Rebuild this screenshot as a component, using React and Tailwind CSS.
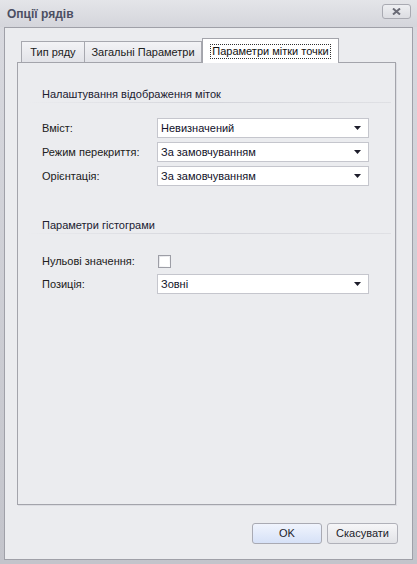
import { useState } from "react";

const font = { fontFamily: '"Liberation Sans", Arial, sans-serif' };

const Arrow = () => (
  <svg width="7" height="4" viewBox="0 0 7 4" className="shrink-0">
    <path d="M0 0h7L3.5 4z" fill="#1d1d2b" />
  </svg>
);

const Combo = ({ value }) => (
  <div className="flex h-[20px] w-[212px] items-center justify-between border border-[#c5c6cd] bg-white pl-[3px] pr-[7px] text-[#11112a]">
    <span>{value}</span>
    <Arrow />
  </div>
);

const Row = ({ label, children }) => (
  <div className="flex h-[20px] items-center">
    <div className="w-[115px] shrink-0 text-[#202020]">{label}</div>
    {children}
  </div>
);

const SectionTitle = ({ children }) => (
  <div>
    <div className="ml-[24px] h-[16px] leading-[16px] text-[#202030]">{children}</div>
    <div className="ml-[8px] mr-[4px] h-px bg-gradient-to-r from-transparent via-[#d3d4da] to-[#dfe0e4]" />
  </div>
);

const Tab = ({ label, width, active, onClick }) =>
  active ? (
    <div
      className={`${width} relative z-10 -mb-px flex h-[25px] items-center justify-center border border-b-0 border-[#a3a4ab] bg-white`}
    >
      <span className="border border-dotted border-[#303030] px-[1px] leading-[13px] text-[#101010]">
        {label}
      </span>
    </div>
  ) : (
    <button
      onClick={onClick}
      className={`${width} flex h-[21px] items-center justify-center border border-b-0 border-[#a7a8af] bg-gradient-to-b from-[#f3f3f6] to-[#e2e3e8] text-[#202020]`}
    >
      {label}
    </button>
  );

export default function App() {
  const [tab, setTab] = useState(2);
  const [zeroValues, setZeroValues] = useState(false);

  return (
    <div
      style={font}
      className="flex h-[564px] w-[417px] flex-col bg-gradient-to-b from-[#d9dae0] to-[#c3c4cb] text-[11px]"
    >
      {/* title bar */}
      <div className="flex h-[27px] items-center justify-between pl-[7px] pr-[6px] bg-gradient-to-b from-[#e4e5e9] to-[#d4d5db]">
        <span className="text-[12px] font-bold text-[#4c4f63]">Опції рядів</span>
        <button className="mb-[4px] flex h-[15px] w-[29px] items-center justify-center rounded-[3px] border border-[#a9aab2] bg-gradient-to-b from-[#eeeff2] to-[#dcdde2]">
          <svg width="9" height="7" viewBox="0 0 9 7">
            <path d="M1 0.5l7 6M8 0.5l-7 6" stroke="#6a6b76" strokeWidth="2" />
          </svg>
        </button>
      </div>

      <div className="flex flex-1 flex-col px-[4px] pb-[4px]">
        <div className="flex flex-1 flex-col border border-[#9fa0a8] bg-[#ebecef]">
          {/* tab strip */}
          <div className="ml-[12px] mt-[10px] flex h-[24px] items-end pl-[4px]">
            <Tab label="Тип ряду" width="w-[64px]" active={tab === 0} onClick={() => setTab(0)} />
            <Tab label="Загальні Параметри" width="w-[118px] -ml-px" active={tab === 1} onClick={() => setTab(1)} />
            <Tab label="Параметри мітки точки" width="w-[137px]" active={tab === 2} onClick={() => setTab(2)} />
          </div>

          {/* tab page */}
          <div className="ml-[12px] h-[443px] w-[379px] border border-[#a3a4ab] bg-[#ebecef] shadow-[1px_1px_0_#dcdde2]">
            <div className="mt-[23px]">
              <SectionTitle>Налаштування відображення міток</SectionTitle>
            </div>
            <div className="ml-[24px] mt-[15px] flex flex-col gap-[4px]">
              <Row label="Вміст:">
                <Combo value="Невизначений" />
              </Row>
              <Row label="Режим перекриття:">
                <Combo value="За замовчуванням" />
              </Row>
              <Row label="Орієнтація:">
                <Combo value="За замовчуванням" />
              </Row>
            </div>

            <div className="mt-[31px]">
              <SectionTitle>Параметри гістограми</SectionTitle>
            </div>
            <div className="ml-[24px] mt-[17px] flex flex-col gap-[3px]">
              <Row label="Нульові значення:">
                <button
                  onClick={() => setZeroValues(!zeroValues)}
                  className="ml-[1px] flex h-[13px] w-[13px] items-center justify-center border border-[#9d9ea6] bg-gradient-to-br from-[#e2e3e7] to-white p-[1px]"
                >
                  <span className="h-full w-full bg-white text-[9px] leading-[9px]">
                    {zeroValues ? "✓" : ""}
                  </span>
                </button>
              </Row>
              <Row label="Позиція:">
                <Combo value="Зовні" />
              </Row>
            </div>
          </div>

          {/* dialog buttons */}
          <div className="mr-[14px] mt-[18px] flex justify-end gap-[5px]">
            <button className="h-[21px] w-[70px] rounded-[3px] border border-[#a9aab3] bg-gradient-to-b from-[#f0f4fd] to-[#d6e1f7] text-[#1c1c2a]">
              OK
            </button>
            <button className="h-[21px] w-[71px] rounded-[3px] border border-[#b0b1b9] bg-gradient-to-b from-[#f6f6f8] to-[#e2e3e7] text-[#1c1c2a]">
              Скасувати
            </button>
          </div>
        </div>
      </div>
    </div>
  );
}
